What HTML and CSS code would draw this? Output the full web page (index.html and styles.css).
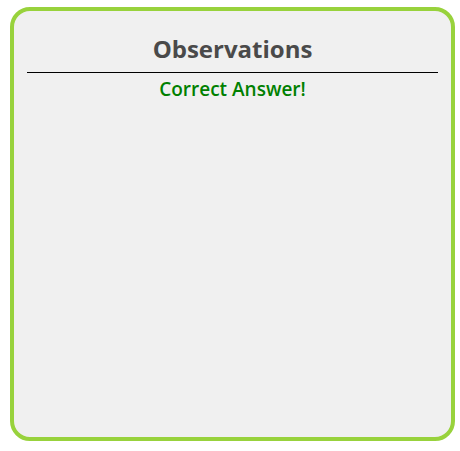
FILE: index.html
```html
<!DOCTYPE html>
<html lang="en">
<head>
<meta charset="utf-8">
<title>Observations</title>
<link rel="stylesheet" href="styles.css">
</head>
<body>
<section class="panel">
<h2 class="panel-title">Observations</h2>
<p class="result">Correct Answer!</p>
</section>
</body>
</html>
```
FILE: styles.css
```css
* {
  box-sizing: border-box;
}

body {
  margin: 0;
  height: 100vh;
  padding: 7px 5px 10px 10px;
  background: #fff;
  font-family: "Segoe UI", "Open Sans", "Noto Sans", sans-serif;
}

.panel {
  height: 100%;
  padding: 16px 13px;
  border: 4px solid #98d23c;
  border-radius: 20px;
  background: #f0f0f0;
  text-align: center;
}

.panel-title {
  margin: 0;
  padding: 4px 0 5px;
  border-bottom: 1px solid #000;
  color: #4a4a4a;
  font-size: 24px;
  font-weight: 700;
  line-height: 36px;
}

.result {
  margin: 4px 0 0;
  color: #008000;
  font-size: 19px;
  font-weight: 600;
  line-height: 24px;
}
```
